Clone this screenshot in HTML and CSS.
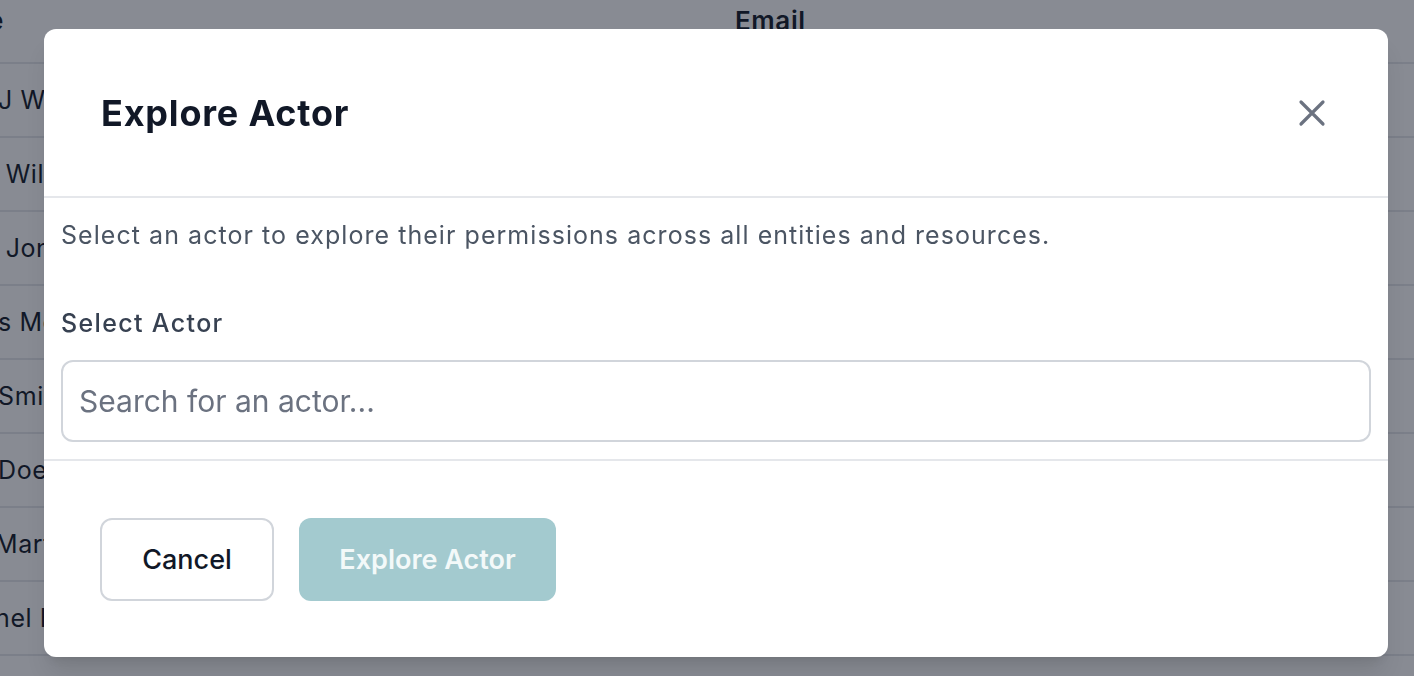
FILE: index.html
```html
<!DOCTYPE html>
<html lang="en">
<head>
<meta charset="utf-8">
<title>Explore Actor</title>
<link rel="stylesheet" href="styles.css">
</head>
<body>
<div class="page">
  <div class="table">
    <div class="row head"><div class="c1 hcut">e</div><div class="c2">Email</div></div>
    <div class="row"><div class="c1">J W</div><div class="c2"></div></div>
    <div class="row"><div class="c1">&nbsp;Wil</div><div class="c2"></div></div>
    <div class="row"><div class="c1">&nbsp;Jon</div><div class="c2"></div></div>
    <div class="row"><div class="c1">s Mo</div><div class="c2"></div></div>
    <div class="row"><div class="c1">Smi</div><div class="c2"></div></div>
    <div class="row"><div class="c1">Doe</div><div class="c2"></div></div>
    <div class="row"><div class="c1 cut">Mart</div><div class="c2"></div></div>
    <div class="row"><div class="c1 cut">hel B</div><div class="c2"></div></div>
  </div>
</div>
<div class="overlay">
  <div class="modal">
    <div class="modal-head">
      <h2 class="title">Explore Actor</h2>
      <button class="close" aria-label="Close">
        <svg width="28" height="28" viewBox="0 0 28 28" fill="none" stroke="#6b7280" stroke-width="3.2" stroke-linecap="round"><path d="M3 3L25 25M25 3L3 25"/></svg>
      </button>
    </div>
    <div class="modal-body">
      <p class="desc">Select an actor to explore their permissions across all entities and resources.</p>
      <label class="label">Select Actor</label>
      <input class="input" type="text" placeholder="Search for an actor...">
    </div>
    <div class="modal-foot">
      <button class="btn btn-cancel">Cancel</button>
      <button class="btn btn-primary" disabled>Explore Actor</button>
    </div>
  </div>
</div>
</body>
</html>
```
FILE: styles.css
```css
* { box-sizing: border-box; }
html, body { margin: 0; padding: 0; }
body {
  width: 1414px;
  height: 676px;
  overflow: hidden;
  background: #ffffff;
  font-family: Inter, "Noto Sans", "Liberation Sans", sans-serif;
  color: #111827;
}
.page { width: 1414px; }
.table { display: flex; flex-direction: column; }
.row {
  display: flex;
  height: 74px;
  align-items: center;
  border-bottom: 2px solid #e5e7eb;
  font-size: 25px;
  letter-spacing: 0.6px;
}
.row.head {
  height: 64px;
  align-items: flex-start;
  padding-top: 5px;
  font-weight: 600;
  font-size: 26px;
}
.c1 { width: 120px; margin-left: -2px; white-space: pre; }
.c1.cut { margin-left: -5px; }
.c1.hcut { margin-left: -12px; }
.c2 { width: 1300px; padding-left: 627px; }

.overlay {
  position: fixed;
  inset: 0;
  background: rgba(17, 24, 39, 0.5);
  display: flex;
  align-items: flex-start;
  padding: 29px 0 0 44px;
}
.modal {
  width: 1344px;
  height: 628px;
  background: #ffffff;
  border-radius: 12px;
  box-shadow: 0 20px 25px -5px rgba(0,0,0,0.1), 0 8px 10px -6px rgba(0,0,0,0.1);
  display: flex;
  flex-direction: column;
  overflow: hidden;
}
.modal-head {
  display: flex;
  align-items: center;
  justify-content: space-between;
  padding: 64px 62px 63px 57px;
  border-bottom: 2px solid #e5e7eb;
}
.title {
  margin: 0;
  font-size: 36px;
  line-height: 40px;
  font-weight: 700;
  color: #111827;
  letter-spacing: 0.8px;
}
.close {
  border: 0;
  background: none;
  padding: 0;
  width: 28px;
  height: 28px;
  display: flex;
}
.modal-body {
  display: flex;
  flex-direction: column;
  padding: 19px 17px 17px 17px;
  border-bottom: 2px solid #e5e7eb;
}
.desc {
  margin: 0 0 52px 0;
  font-size: 25px;
  line-height: 36px;
  letter-spacing: 1.05px;
  color: #4b5563;
}
.label {
  font-size: 25px;
  line-height: 36px;
  font-weight: 500;
  letter-spacing: 1.35px;
  color: #374151;
  margin-bottom: 19px;
}
.input {
  height: 82px;
  border: 2px solid #d1d5db;
  border-radius: 12px;
  padding: 0 16px;
  font-family: inherit;
  font-size: 30px;
  color: #111827;
  background: #fff;
  outline: none;
}
.input::placeholder { color: #6b7280; }
.modal-foot {
  flex: 1;
  display: flex;
  align-items: flex-start;
  gap: 25px;
  padding: 57px 56px;
}
.btn {
  height: 83px;
  border-radius: 12px;
  font-family: inherit;
  font-size: 27px;
  font-weight: 500;
  cursor: pointer;
}
.btn-cancel {
  width: 174px;
  background: #fff;
  border: 2px solid #d1d5db;
  color: #111827;
}
.btn-primary {
  width: 257px;
  background: #a3cacf;
  border: 0;
  color: #f3f9f9;
  font-weight: 600;
}
```
